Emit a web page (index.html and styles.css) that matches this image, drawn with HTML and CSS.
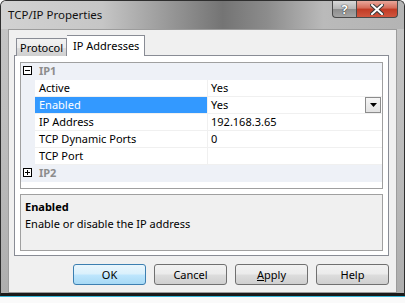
FILE: index.html
```html
<!DOCTYPE html>
<html lang="en">
  <head>
    <meta charset="UTF-8" />
    <title>TCP/IP Properties</title>
    <link rel="stylesheet" href="styles.css">
  </head>
  <body>
    <div class="window">
      <div class="titlebar">
        <span class="title">TCP/IP Properties</span>
        <div class="caption-btns">
          <div class="cap cap-help">?</div>
          <div class="cap cap-close">
            <svg width="14" height="11" viewBox="0 0 14 11">
              <path d="M2 1 L12 10 M12 1 L2 10" stroke="#3a3a3a" stroke-width="4" stroke-linecap="square" />
              <path d="M2 1 L12 10 M12 1 L2 10" stroke="#fff" stroke-width="2" stroke-linecap="square" />
            </svg>
          </div>
        </div>
      </div>

      <div class="client">
        <div class="tabs">
          <div class="tab">Protocol</div>
          <div class="tab active">IP Addresses</div>
        </div>
        <div class="panel">
          <div class="grid">
            <div class="row category">
              <div class="gutter">
                <svg class="expander" width="9" height="9" viewBox="0 0 9 9">
                  <rect x="0.5" y="0.5" width="8" height="8" fill="#fff" stroke="#000" />
                  <path d="M2 4.5 H7" stroke="#000" />
                </svg>
              </div>
              <div class="cat-name">IP1</div>
            </div>
            <div class="row">
              <div class="gutter"></div>
              <div class="name">Active</div>
              <div class="value">Yes</div>
            </div>
            <div class="row selected">
              <div class="gutter"></div>
              <div class="name">Enabled</div>
              <div class="value">Yes
                <div class="dropdown">
                  <svg width="7" height="4" viewBox="0 0 7 4"><path d="M0 0 H7 L3.5 4 Z" fill="#000" /></svg>
                </div>
              </div>
            </div>
            <div class="row">
              <div class="gutter"></div>
              <div class="name">IP Address</div>
              <div class="value">192.168.3.65</div>
            </div>
            <div class="row">
              <div class="gutter"></div>
              <div class="name">TCP Dynamic Ports</div>
              <div class="value">0</div>
            </div>
            <div class="row">
              <div class="gutter"></div>
              <div class="name">TCP Port</div>
              <div class="value"></div>
            </div>
            <div class="row category">
              <div class="gutter">
                <svg class="expander" width="9" height="9" viewBox="0 0 9 9">
                  <rect x="0.5" y="0.5" width="8" height="8" fill="#fff" stroke="#000" />
                  <path d="M2 4.5 H7 M4.5 2 V7" stroke="#000" />
                </svg>
              </div>
              <div class="cat-name">IP2</div>
            </div>
          </div>
          <div class="helppane">
            <div class="help-title">Enabled</div>
            <div class="help-text">Enable or disable the IP address</div>
          </div>
        </div>
        <div class="buttons">
          <div class="btn default">OK</div>
          <div class="btn">Cancel</div>
          <div class="btn"><u>A</u>pply</div>
          <div class="btn">Help</div>
        </div>
      </div>
    </div>
  </body>
</html>
```

FILE: styles.css
```css
* {
  box-sizing: border-box;
}
body {
  margin: 0;
  padding: 0;
  background-color: #fafafa;
  font-family: "Noto Sans", "Open Sans", sans-serif;
  font-size: 11px;
  color: #000;
  width: 405px;
  height: 303px;
  overflow: hidden;
}
.window {
  width: 405px;
  height: 296px;
  border: 1px solid #2e2e2e;
  border-bottom: 3px solid #1a1a1a;
  box-shadow: 0 1px 0 #38b6d8;
  border-radius: 6px 6px 0 0;
  background: linear-gradient(180deg, #c6c6c6 0%, #bcbcbc 50%, #aeaeae 100%);
  padding: 0 7px;
  display: flex;
  flex-direction: column;
}
.titlebar {
  flex-shrink: 0;
  height: 28px;
  margin: 0 -7px;
  padding: 0 6px 0 7px;
  display: flex;
  justify-content: space-between;
  align-items: flex-start;
  border-radius: 5px 5px 0 0;
  background: linear-gradient(90deg, #d2d2d2 0%, #c6c6c6 25%, #979797 42%, #747474 55%, #8c8c8c 66%, #bababa 80%, #b4b4b4 100%);
}
.title {
  margin-top: 6px;
  font-size: 11.5px;
  color: #111;
}
.caption-btns {
  display: flex;
}
.cap {
  height: 17px;
  border: 1px solid #4a4a4a;
  border-top: none;
  display: flex;
  align-items: center;
  justify-content: center;
}
.cap-help {
  width: 24px;
  border-right: none;
  border-radius: 0 0 0 4px;
  background: linear-gradient(180deg, #d8d8d8 0%, #b4b4b4 50%, #8e8e8e 51%, #a4a4a4 100%);
  color: #fff;
  font-weight: bold;
  font-size: 13px;
  text-shadow: 0 0 1px #222, 0 0 1px #222;
}
.cap-close {
  width: 42px;
  border-radius: 0 0 4px 0;
  background: linear-gradient(180deg, #e9a79b 0%, #d46a57 45%, #c13a24 50%, #d0563f 100%);
}
.client {
  flex: 1;
  background-color: #f0f0f0;
  border: 1px solid #9c9c9c;
  padding: 0 7px 0 5px;
  display: flex;
  flex-direction: column;
}
.tabs {
  flex-shrink: 0;
  display: flex;
  align-items: flex-end;
  padding: 4px 0 0 2px;
  height: 25px;
}
.tab {
  height: 18px;
  padding: 0 3px;
  border: 1px solid #898c95;
  border-bottom: none;
  background: linear-gradient(180deg, #f2f2f2 0%, #ebebeb 50%, #dddddd 51%, #cfcfcf 100%);
  line-height: 18px;
  position: relative;
  top: 1px;
}
.tab.active {
  height: 21px;
  padding: 0 5px 0 6px;
  background: #fff;
  border-left: none;
  line-height: 19px;
  z-index: 1;
}
.panel {
  flex-shrink: 0;
  background-color: #fff;
  border: 1px solid #898c95;
  height: 201px;
  padding: 6px 5px 4px 5px;
  display: flex;
  flex-direction: column;
  gap: 5px;
}
.grid {
  height: 127px;
  border: 1px solid #a0a0a0;
  background-color: #fff;
}
.row {
  display: flex;
  height: 17px;
  line-height: 16px;
}
.gutter {
  width: 14px;
  background-color: #eef1f7;
  position: relative;
}
.category {
  background-color: #eef1f7;
}
.cat-name {
  padding-left: 4px;
  color: #8d8d8d;
  font-weight: bold;
}
.expander {
  position: absolute;
  left: 2px;
  top: 3px;
}
.name {
  width: 173px;
  padding-left: 4px;
  border-bottom: 1px solid #f0f0f0;
  border-right: 1px solid #f0f0f0;
}
.value {
  flex: 1;
  padding-left: 3px;
  border-bottom: 1px solid #f0f0f0;
  display: flex;
  justify-content: space-between;
}
.selected .name {
  background-color: #3399ff;
  color: #fff;
}
.dropdown {
  width: 16px;
  height: 16px;
  margin-right: 1px;
  border: 1px solid #8c8c8c;
  background: linear-gradient(180deg, #f6f6f6 0%, #e2e2e2 100%);
  display: flex;
  align-items: center;
  justify-content: center;
}
.helppane {
  height: 57px;
  border: 1px solid #a0a0a0;
  background-color: #f0f0f0;
  padding: 3px 4px;
}
.help-title {
  font-weight: bold;
  line-height: 17px;
}
.help-text {
  line-height: 17px;
}
.buttons {
  flex-shrink: 0;
  display: flex;
  justify-content: flex-end;
  gap: 8px;
  margin-top: 8px;
}
.btn {
  width: 73px;
  height: 21px;
  border: 1px solid #707070;
  border-radius: 3px;
  background: linear-gradient(180deg, #f2f2f2 0%, #ebebeb 48%, #dddddd 52%, #cfcfcf 100%);
  text-align: center;
  line-height: 19px;
}
.btn.default {
  border-color: #3c7fb1;
  background: linear-gradient(180deg, #eaf6fd 0%, #d9f0fc 48%, #bee6fd 52%, #a7d9f5 100%);
}
```
